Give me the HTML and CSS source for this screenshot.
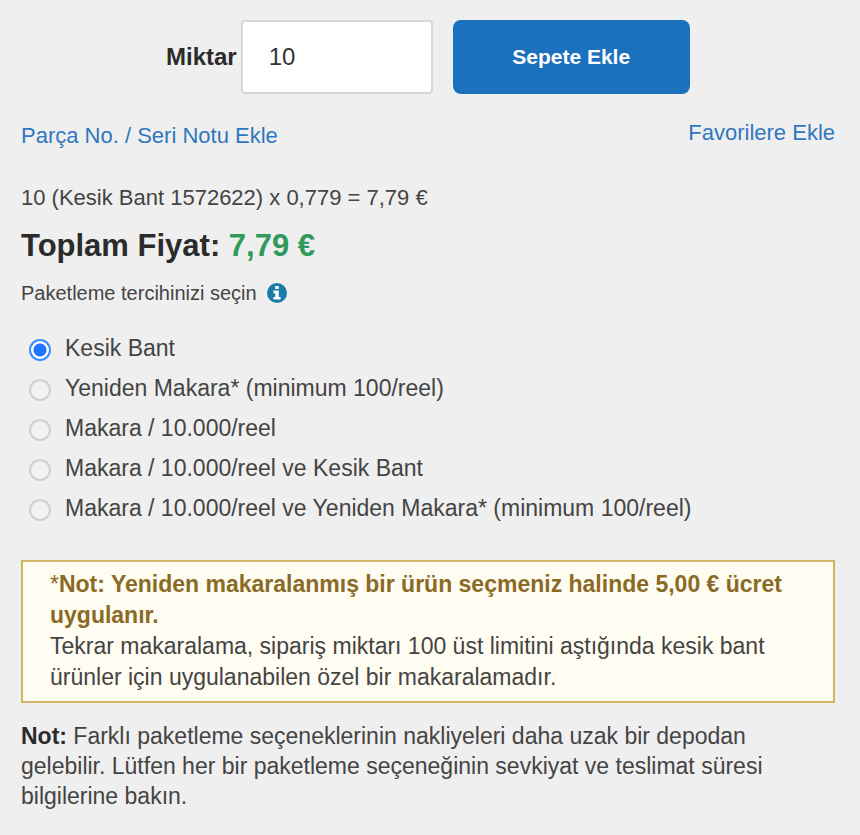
FILE: index.html
```html
<!DOCTYPE html>
<html lang="tr">
<head>
    <meta charset="UTF-8">
    <meta name="viewport" content="width=device-width, initial-scale=1.0">
    <title>Sepete Ekle</title>
    <link rel="stylesheet" href="styles.css">
</head>
<body>

<form class="order">
    <div class="quantity-row">
        <label for="quantity">Miktar</label>
        <input type="text" id="quantity" class="quantity" value="10" inputmode="numeric">
        <button type="button" class="add-button">Sepete Ekle</button>
    </div>

    <div class="links">
        <a href="#">Parça No. / Seri Notu Ekle</a>
        <a href="#" class="favorite">Favorilere Ekle</a>
    </div>

    <p class="calculation">10 (Kesik Bant 1572622) x 0,779 = 7,79 €</p>
    <h2 class="total">Toplam Fiyat: <span class="price">7,79 €</span></h2>

    <fieldset class="packaging">
        <legend>
            Paketleme tercihinizi seçin
            <svg class="info-icon" viewBox="0 0 20 20" aria-hidden="true">
                <circle cx="10" cy="10" r="10" fill="#1a7ba8"/>
                <path d="M8.2 2.9h3.6v3H8.2zM6.4 7.6h5.4v6.4h1.8v2.6H6.4V14h1.8v-3.8H6.4z" fill="#fff"/>
            </svg>
        </legend>
        <div class="option">
            <input type="radio" name="pack" id="pack1" checked>
            <label for="pack1">Kesik Bant</label>
        </div>
        <div class="option">
            <input type="radio" name="pack" id="pack2">
            <label for="pack2">Yeniden Makara* (minimum 100/reel)</label>
        </div>
        <div class="option">
            <input type="radio" name="pack" id="pack3">
            <label for="pack3">Makara / 10.000/reel</label>
        </div>
        <div class="option">
            <input type="radio" name="pack" id="pack4">
            <label for="pack4">Makara / 10.000/reel ve Kesik Bant</label>
        </div>
        <div class="option">
            <input type="radio" name="pack" id="pack5">
            <label for="pack5">Makara / 10.000/reel ve Yeniden Makara* (minimum 100/reel)</label>
        </div>
    </fieldset>

    <div class="notice">
        <p class="fee">*<strong>Not: Yeniden makaralanmış bir ürün seçmeniz halinde 5,00 € ücret uygulanır.</strong></p>
        <p>Tekrar makaralama, sipariş miktarı 100 üst limitini aştığında kesik bant ürünler için uygulanabilen özel bir makaralamadır.</p>
    </div>

    <p class="note"><strong>Not:</strong> Farklı paketleme seçeneklerinin nakliyeleri daha uzak bir depodan gelebilir. Lütfen her bir paketleme seçeneğinin sevkiyat ve teslimat süresi bilgilerine bakın.</p>
</form>

</body>
</html>
```
FILE: styles.css
```css
* { box-sizing: border-box; }
body {
    margin: 0;
    background-color: #efefef;
    color: #444;
    font-family: "Liberation Sans", Arial, sans-serif;
    font-size: 22px;
    line-height: 30px;
}
p, h2 { margin: 0; }
a { color: #2f77c0; text-decoration: none; }
a:hover { text-decoration: underline; }
.order { padding: 20px 25px 20px 21px; }
.quantity-row {
    display: flex;
    align-items: center;
    padding-left: 145px;
}
.quantity-row label {
    color: #2b2b2b;
    font-size: 24px;
    font-weight: bold;
    margin-right: 4px;
}
.quantity {
    width: 192px;
    height: 74px;
    padding: 0 26px;
    border: 2px solid #d6d6d6;
    border-radius: 4px;
    background-color: #fff;
    color: #333;
    font-family: inherit;
    font-size: 24px;
}
.add-button {
    width: 237px;
    height: 74px;
    margin-left: 20px;
    border: none;
    border-radius: 8px;
    background-color: #1c71bf;
    color: #fff;
    font-family: inherit;
    font-size: 21px;
    font-weight: bold;
    cursor: pointer;
}
.add-button:hover { background-color: #155c9d; }
.links {
    display: flex;
    justify-content: space-between;
    align-items: flex-end;
    padding-top: 24px;
}
.favorite { padding-bottom: 3px; }
.calculation { margin-top: 32px; }
.total {
    margin-top: 13px;
    color: #2b2b2b;
    font-size: 31px;
    line-height: 40px;
}
.price { color: #2f9a5b; }
.packaging {
    margin: 12px 0 0;
    padding: 0;
    border: none;
}
.packaging legend {
    display: flex;
    align-items: center;
    gap: 10px;
    padding: 0;
    margin-bottom: 20px;
    font-size: 20px;
}
.info-icon { width: 20px; height: 20px; }
.option {
    display: flex;
    align-items: center;
    height: 40px;
    padding-left: 8px;
    font-size: 23px;
}
.option input {
    appearance: none;
    width: 22px;
    height: 22px;
    margin: 4px 14px 0 0;
    border: 2px solid #d0d0d0;
    border-radius: 50%;
    background-color: #f2f2f2;
}
.option input:checked {
    border-color: #3b8bff;
    background: radial-gradient(circle, #1f74ff 6px, #fff 7px);
}
.notice {
    margin-top: 32px;
    padding: 7px 27px 8px;
    border: 2px solid #d3b566;
    background-color: #fffcf1;
    font-size: 23px;
    line-height: 31px;
}
.fee { color: #8a6a25; }
.note {
    margin-top: 18px;
    font-size: 23px;
}
.note strong { color: #2b2b2b; }
```
